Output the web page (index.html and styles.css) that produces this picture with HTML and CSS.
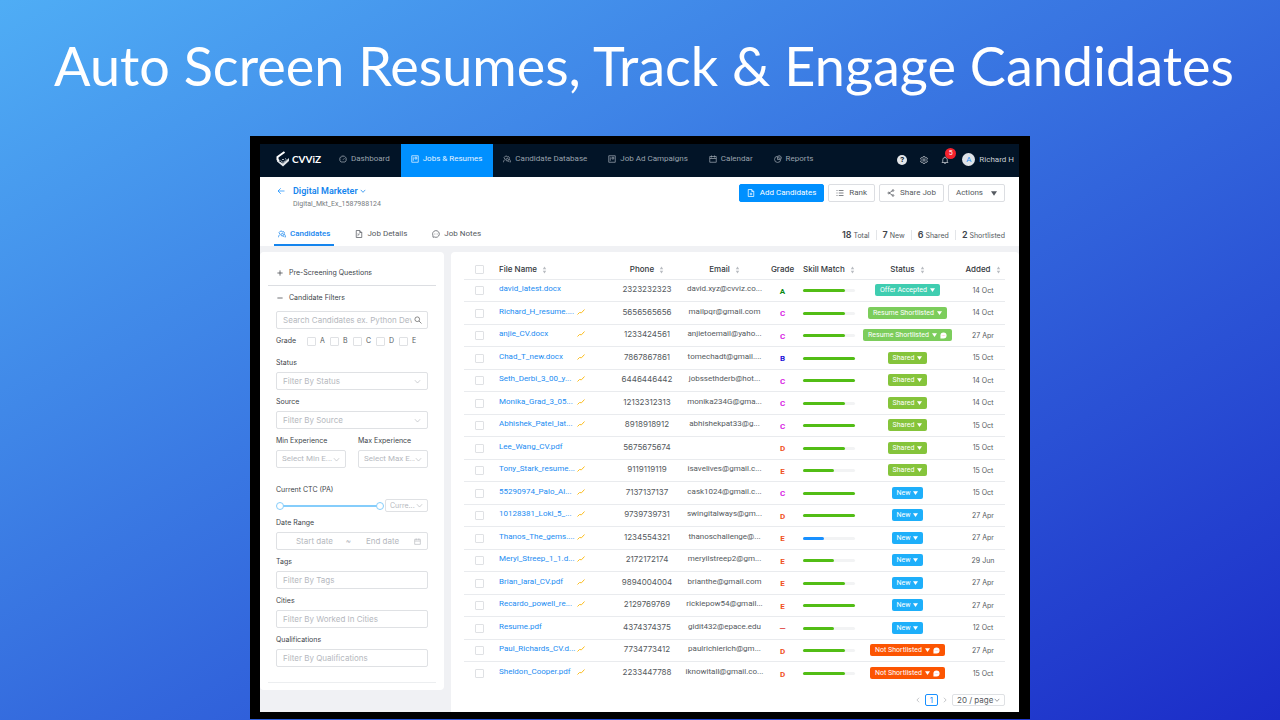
FILE: index.html
```html
<!DOCTYPE html>
<html lang="en">
<head>
<meta charset="utf-8">
<title>Auto Screen Resumes, Track &amp; Engage Candidates</title>
<link rel="stylesheet" href="styles.css">
</head>
<body>
<svg class="sprite" aria-hidden="true">
  <symbol id="i-gauge" viewBox="0 0 16 16"><path d="M4 14a6.7 6.7 0 1 1 8 0zM8 9.500l3-3M8 3v1M3 8.500h1M12 8.500h1M4.500 5l.7.7"/></symbol>
  <symbol id="i-board" viewBox="0 0 16 16"><path d="M1.500 1.500h13v13h-13zM4.500 4.500v7M8 4.500v3.500h3.500v-3.500z"/></symbol>
  <symbol id="i-people" viewBox="0 0 16 16"><path d="M3.500 8A3.500 3.500 0 1 1 9.500 5M1 14.500c0-3 1.500-5 4-6M10 3a3 3 0 0 1 2.500 4.500M12.500 8c1.500 1.500 2.500 3.500 2.500 6.500"/><circle cx="8.500" cy="9.500" r="2.500"/><path d="M10 11.500l3 3"/></symbol>
  <symbol id="i-cal" viewBox="0 0 16 16"><path d="M1.500 3h13v11.500h-13zM1.500 7h13M5 1v4M11 1v4"/></symbol>
  <symbol id="i-pie" viewBox="0 0 16 16"><path d="M7 2.500A6.200 6.200 0 1 0 13.500 9H7zM9.500 1v5.500H15A6 6 0 0 0 9.500 1z"/></symbol>
  <symbol id="i-gear" viewBox="0 0 16 16"><path d="M6.500 1h3l.5 2 1.500.9 2-.7 1.500 2.600-1.500 1.400v1.600l1.500 1.400-1.500 2.600-2-.7-1.500.9-.5 2h-3l-.5-2-1.500-.9-2 .7L1 10.200l1.500-1.400V7.200L1 5.800l1.500-2.600 2 .7L6 3z"/><circle cx="8" cy="8" r="2.300"/></symbol>
  <symbol id="i-bell" viewBox="0 0 16 16"><path d="M1.500 13h13M3.500 13V7.500a4.500 4.500 0 0 1 9 0V13M6.500 15h3M8 1v2"/></symbol>
  <symbol id="i-doc" viewBox="0 0 16 16"><path d="M2.500 1h7l4 4v10h-11zM9.500 1v4h4M5.500 10h5M8 7.500v5"/></symbol>
  <symbol id="i-docedit" viewBox="0 0 16 16"><path d="M2.500 1h7l4 4v10h-11zM9.500 1v4h4M5 11.500l4.500-4M5 8h2"/></symbol>
  <symbol id="i-chat" viewBox="0 0 16 16"><path d="M2 14.500l-.3-4A6.700 6.700 0 1 1 5 14zM4.500 8h1M7.500 8h1M10.500 8h1"/></symbol>
  <symbol id="i-list" viewBox="0 0 16 16"><path d="M5.500 3H15M5.500 8H15M5.500 13H15M1 3h2M1 8h2M1 13h2"/></symbol>
  <symbol id="i-share" viewBox="0 0 16 16"><path d="M11 3.500L4.500 8l6.500 4.500"/><circle cx="12" cy="3" r="1.700"/><circle cx="3.500" cy="8" r="1.700"/><circle cx="12" cy="13" r="1.700"/></symbol>
  <symbol id="i-back" viewBox="0 0 16 16"><path d="M15 8H2M7.500 2.500L2 8l5.500 5.500"/></symbol>
  <symbol id="i-down" viewBox="0 0 16 16"><path d="M2 5l6 6.500L14 5"/></symbol>
  <symbol id="i-left" viewBox="0 0 16 16"><path d="M11 2L5 8l6 6"/></symbol>
  <symbol id="i-right" viewBox="0 0 16 16"><path d="M5 2l6 6-6 6"/></symbol>
  <symbol id="i-search" viewBox="0 0 16 16"><circle cx="6.500" cy="6.500" r="4.700"/><path d="M10 10l5 5"/></symbol>
  <symbol id="i-plus" viewBox="0 0 16 16"><path d="M8 1v14M1 8h14"/></symbol>
  <symbol id="i-minus" viewBox="0 0 16 16"><path d="M1 8h14"/></symbol>
  <symbol id="i-sort" viewBox="0 0 8 14"><path d="M4 1l3 4.500H1zM4 13L1 8.500h6z"/></symbol>
  <symbol id="i-caret" viewBox="0 0 8 6"><path d="M0 0h8L4 6z"/></symbol>
  <symbol id="i-trend" viewBox="0 0 16 12"><path d="M1 11l4-4 4 .5L15 1"/></symbol>
  <symbol id="i-bubble" viewBox="0 0 16 16"><path class="solid" d="M1 15V8a7 7 0 1 1 7 7z"/><path class="dots" d="M4 8h2M7 8h2M10 8h2"/></symbol>
</svg>
<main class="slide">
  <h1 class="title">Auto Screen Resumes, Track &amp; Engage Candidates</h1>
  <div class="frame">
    <header class="topbar">
      <a class="logo" href="#" aria-label="CVViZ">
        <svg class="logo-mark" viewBox="0 0 28 32"><path d="M17 2L3 12v5l3 3" fill="none" stroke="#fff" stroke-width="4"/><path d="M2 18l12 7 12-11v6L14 31 2 21z" fill="#e3e7eb"/><path d="M9 19l5 4 5-4M12 16l2 2 2-2M18 15l3 2" fill="none" stroke="#aab4bf" stroke-width="2"/></svg>
        <span>CVViZ</span>
      </a>
      <nav class="nav">
        <a href="#"><svg class="icon"><use href="#i-gauge"/></svg>Dashboard</a>
        <a href="#" class="active"><svg class="icon"><use href="#i-board"/></svg>Jobs &amp; Resumes</a>
        <a href="#"><svg class="icon"><use href="#i-people"/></svg>Candidate Database</a>
        <a href="#"><svg class="icon"><use href="#i-board"/></svg>Job Ad Campaigns</a>
        <a href="#"><svg class="icon"><use href="#i-cal"/></svg>Calendar</a>
        <a href="#"><svg class="icon"><use href="#i-pie"/></svg>Reports</a>
      </nav>
      <div class="tools">
        <button class="help" aria-label="Help">?</button>
        <button aria-label="Settings"><svg class="icon"><use href="#i-gear"/></svg></button>
        <button class="bell" aria-label="Notifications"><svg class="icon"><use href="#i-bell"/></svg><span class="badge">5</span></button>
        <a class="user" href="#"><span class="avatar">A</span>Richard H</a>
      </div>
    </header>
    <section class="head">
      <div class="head-row">
        <button class="back" aria-label="Back"><svg class="icon"><use href="#i-back"/></svg></button>
        <div class="job">
          <h2>Digital Marketer <svg class="icon tiny"><use href="#i-down"/></svg></h2>
          <p>Digital_Mkt_Ex_1587988124</p>
        </div>
        <div class="actions">
          <button class="btn primary"><svg class="icon"><use href="#i-doc"/></svg>Add Candidates</button>
          <button class="btn"><svg class="icon"><use href="#i-list"/></svg>Rank</button>
          <button class="btn"><svg class="icon"><use href="#i-share"/></svg>Share Job</button>
          <button class="btn wide">Actions<svg class="caret"><use href="#i-caret"/></svg></button>
        </div>
      </div>
      <div class="tab-row">
        <nav class="tabs">
          <a href="#" class="active"><svg class="icon"><use href="#i-people"/></svg>Candidates</a>
          <a href="#"><svg class="icon"><use href="#i-docedit"/></svg>Job Details</a>
          <a href="#"><svg class="icon"><use href="#i-chat"/></svg>Job Notes</a>
        </nav>
        <ul class="stats">
          <li><b>18</b> Total</li><li><b>7</b> New</li><li><b>6</b> Shared</li><li><b>2</b> Shortlisted</li>
        </ul>
      </div>
    </section>
    <div class="body">
      <form class="filters">
        <button type="button" class="fold"><svg class="icon tiny"><use href="#i-plus"/></svg>Pre-Screening Questions</button>
        <hr>
        <button type="button" class="fold"><svg class="icon tiny"><use href="#i-minus"/></svg>Candidate Filters</button>
        <div class="fields">
          <div class="control search"><input aria-label="Search candidates" placeholder="Search Candidates ex. Python Developer"><svg class="icon"><use href="#i-search"/></svg></div>
          <fieldset class="grades">
            <legend>Grade</legend>
            <label><input type="checkbox">A</label><label><input type="checkbox">B</label><label><input type="checkbox">C</label><label><input type="checkbox">D</label><label><input type="checkbox">E</label>
          </fieldset>
          <div class="field"><label for="status">Status</label><div class="control"><select id="status"><option>Filter By Status</option></select><svg class="icon"><use href="#i-down"/></svg></div></div>
          <div class="field"><label for="source">Source</label><div class="control"><select id="source"><option>Filter By Source</option></select><svg class="icon"><use href="#i-down"/></svg></div></div>
          <div class="pair">
            <div class="field"><label for="min">Min Experience</label><div class="control"><select id="min"><option>Select Min E...</option></select><svg class="icon"><use href="#i-down"/></svg></div></div>
            <div class="field"><label for="max">Max Experience</label><div class="control"><select id="max"><option>Select Max E...</option></select><svg class="icon"><use href="#i-down"/></svg></div></div>
          </div>
          <div class="field ctc"><label for="ctc-low">Current CTC (PA)</label>
            <div class="range-row">
              <div class="range"><input id="ctc-low" type="range" value="0"><input type="range" value="100" aria-label="Maximum CTC"></div>
              <div class="control"><select aria-label="Currency"><option>Curre...</option></select><svg class="icon"><use href="#i-down"/></svg></div>
            </div>
          </div>
          <div class="field"><label for="start">Date Range</label><div class="control dates"><input id="start" placeholder="Start date"><span>~</span><input aria-label="End date" placeholder="End date"><svg class="icon"><use href="#i-cal"/></svg></div></div>
          <div class="field"><label for="tags">Tags</label><div class="control"><input id="tags" placeholder="Filter By Tags"></div></div>
          <div class="field"><label for="cities">Cities</label><div class="control"><input id="cities" placeholder="Filter By Worked In Cities"></div></div>
          <div class="field"><label for="quals">Qualifications</label><div class="control"><input id="quals" placeholder="Filter By Qualifications"></div></div>
        </div>
        <hr class="last">
      </form>
      <section class="results">
        <table>
          <colgroup><col class="c-check"><col><col class="c-phone"><col class="c-email"><col class="c-grade"><col class="c-skill"><col class="c-status"><col class="c-added"></colgroup>
          <thead><tr>
            <th><input type="checkbox" aria-label="Select all"></th>
            <th class="name">File Name<svg class="sort"><use href="#i-sort"/></svg></th>
            <th>Phone<svg class="sort"><use href="#i-sort"/></svg></th>
            <th>Email<svg class="sort"><use href="#i-sort"/></svg></th>
            <th>Grade</th>
            <th class="skill">Skill Match<svg class="sort"><use href="#i-sort"/></svg></th>
            <th>Status<svg class="sort"><use href="#i-sort"/></svg></th>
            <th class="added">Added<svg class="sort"><use href="#i-sort"/></svg></th>
          </tr></thead>
          <tbody id="rows"></tbody>
        </table>
        <nav class="pager" aria-label="Pages">
          <button aria-label="Previous"><svg class="icon"><use href="#i-left"/></svg></button>
          <button class="current">1</button>
          <button aria-label="Next"><svg class="icon"><use href="#i-right"/></svg></button>
          <div class="control"><select aria-label="Page size"><option>20 / page</option></select><svg class="icon"><use href="#i-down"/></svg></div>
        </nav>
      </section>
    </div>
  </div>
</main>
<script src="rows.js"></script>
</body>
</html>
```
FILE: rows.js
```js
// name, has trend, phone, email, grade, match %, status, has comment, date
const candidates = [
  ["david_latest.docx", 0, "2323232323", "david.xyz@cvviz.co...", "A", 80, "Offer Accepted", 0, "14 Oct"],
  ["Richard_H_resume....", 1, "5656565656", "mailpqr@gmail.com", "C", 80, "Resume Shortlisted", 0, "14 Oct"],
  ["anjie_CV.docx", 1, "1233424561", "anjietoemail@yaho...", "C", 80, "Resume Shortlisted", 1, "27 Apr"],
  ["Chad_T_new.docx", 1, "7867867861", "tomechadt@gmail....", "B", 100, "Shared", 0, "15 Oct"],
  ["Seth_Derbi_3_00_y...", 1, "6446446442", "jobssethderb@hot...", "C", 100, "Shared", 0, "14 Oct"],
  ["Monika_Grad_3_05...", 1, "12132312313", "monika234G@gma...", "C", 80, "Shared", 0, "14 Oct"],
  ["Abhishek_Patel_lat...", 1, "8918918912", "abhishekpat33@g...", "C", 100, "Shared", 0, "15 Oct"],
  ["Lee_Wang_CV.pdf", 0, "5675675674", "", "D", 80, "Shared", 0, "15 Oct"],
  ["Tony_Stark_resume...", 1, "9119119119", "isavelives@gmail.c...", "E", 60, "Shared", 0, "15 Oct"],
  ["55290974_Palo_Al...", 1, "7137137137", "cask1024@gmail.c...", "C", 100, "New", 0, "15 Oct"],
  ["10128381_Loki_5_...", 1, "9739739731", "swingitalways@gm...", "D", 100, "New", 0, "27 Apr"],
  ["Thanos_The_gems....", 1, "1234554321", "thanoschallenge@...", "E", 40, "New", 0, "27 Apr"],
  ["Meryl_Streep_1_1.d...", 1, "2172172174", "meryilstreep2@gm...", "E", 60, "New", 0, "29 Jun"],
  ["Brian_laral_CV.pdf", 1, "9894004004", "brianthe@gmail.com", "E", 80, "New", 0, "27 Apr"],
  ["Recardo_powell_re...", 1, "2129769769", "rickiepow54@gmail...", "E", 100, "New", 0, "27 Apr"],
  ["Resume.pdf", 0, "4374374375", "gidit432@epace.edu", "—", 60, "New", 0, "12 Oct"],
  ["Paul_Richards_CV.d...", 1, "7734773412", "paulrichierich@gm...", "D", 80, "Not Shortlisted", 1, "27 Apr"],
  ["Sheldon_Cooper.pdf", 1, "2233447788", "iknowitall@gmail.co...", "D", 80, "Not Shortlisted", 1, "15 Oct"]
];

const slug = (text) => text.toLowerCase().replace(" ", "-");

document.getElementById("rows").innerHTML = candidates.map(([name, trend, phone, email, grade, match, status, comment, date]) => `
  <tr>
    <td><input type="checkbox" aria-label="Select ${name}"></td>
    <td class="name high"><div class="file"><a href="#">${name}</a>${trend ? '<svg class="trend"><use href="#i-trend"/></svg>' : ""}</div></td>
    <td class="phone high">${phone}</td>
    <td class="high">${email}</td>
    <td class="grade grade-${grade === "—" ? "none" : grade}">${grade}</td>
    <td class="skill"><div class="bar"><div class="fill${match < 50 ? " low" : ""}" style="width:${match}%"></div></div></td>
    <td><button class="tag ${slug(status)}">${status}<svg class="caret"><use href="#i-caret"/></svg>${comment ? '<svg class="bubble"><use href="#i-bubble"/></svg>' : ""}</button></td>
    <td class="added">${date}</td>
  </tr>`).join("");
```
FILE: styles.css
```css
* { box-sizing: border-box; }
body { margin: 0; font-family: Roboto, "Liberation Sans", sans-serif; font-size: 8px; line-height: 12px; color: #555a60; }
h1, h2, p, ul, fieldset, legend { margin: 0; padding: 0; border: 0; }
a { color: inherit; text-decoration: none; }
button, input, select { font: inherit; color: inherit; margin: 0; padding: 0; border: 0; background: none; }
.sprite { display: none; }
.icon { width: 8px; height: 8px; flex: none; fill: none; stroke: currentColor; stroke-width: 1.5; }
.icon.tiny { width: 6px; height: 6px; stroke-width: 2; }
.caret { width: 6px; height: 5px; fill: currentColor; flex: none; }
.filters, .stats, .phone, th, .pager { font-family: Inter, "Liberation Sans", sans-serif; }

.slide { min-height: 100vh; padding: 30px 250px 1px; background: linear-gradient(to bottom right, #4fadf5, #1b2cc8); }
.title { margin: 0 -250px 34px; padding-left: 8px; text-align: center; white-space: nowrap; color: #fff; font: 400 54px/72px Lato, sans-serif; }
.frame { padding: 8px 11px 7px 10px; background: #000; }

.topbar { display: flex; height: 33px; padding-right: 5px; background: #021427; color: #9aa3ad; }
.logo { display: flex; align-items: center; gap: 2px; width: 69px; padding: 0 0 3px 16px; color: #fff; font: 700 10px/12px Lato, sans-serif; }
.logo-mark { width: 14px; height: 16px; }
.nav { display: flex; }
.nav a { display: flex; align-items: center; gap: 4px; padding: 0 11px 3px 10px; white-space: nowrap; }
.nav .active { background: #0090ff; color: #e5f3ff; }
.tools { display: flex; align-items: center; gap: 13px; margin-left: auto; padding-bottom: 2px; color: #c9ced4; }
.tools button { display: flex; position: relative; }
.tools .help { justify-content: center; width: 10px; height: 10px; border-radius: 50%; background: #e4e7ea; color: #021427; font-weight: 700; line-height: 10px; }
.badge { position: absolute; left: 4px; top: -8px; width: 11px; height: 11px; border-radius: 50%; background: #f5222d; color: #fff; font-size: 7px; line-height: 11px; text-align: center; }
.user { display: flex; align-items: center; gap: 4px; white-space: nowrap; }
.avatar { width: 13px; height: 13px; border-radius: 50%; background: #dfe3e8; color: #2b8ff0; line-height: 13px; text-align: center; }

.head { background: #fff; padding: 7px 14px 0; }
.head-row { display: flex; align-items: flex-start; }
.back { display: flex; width: 19px; padding: 3px 3px; color: #1890ff; }
.job h2 { color: #1585ee; font-size: 9px; line-height: 14px; font-weight: 600; }
.job p { font-size: 7px; line-height: 12px; color: #777b80; }
.actions { display: flex; gap: 4px; margin-left: auto; }
.btn { display: flex; align-items: center; gap: 5px; height: 18px; padding: 0 7px; border: 1px solid #dcdee2; border-radius: 2px; white-space: nowrap; }
.btn.primary { background: #0090ff; border-color: #0090ff; color: #fff; }
.btn.wide { gap: 8px; }
.tab-row { display: flex; justify-content: space-between; margin-top: 13px; }
.tabs { display: flex; gap: 17px; }
.tabs a { display: flex; align-items: center; gap: 4px; height: 23px; padding: 0 4px; border-bottom: 2px solid transparent; }
.tabs .active { color: #1585ee; border-color: #1585ee; font-weight: 500; }
.stats { display: flex; align-items: center; padding-top: 1px; list-style: none; font-size: 7px; }
.stats li + li { margin-left: 6px; padding-left: 6px; border-left: 1px solid #e3e5e8; line-height: 9px; }
.stats b { font-size: 9px; font-weight: 600; color: #40444a; }

.body { display: flex; gap: 7px; padding-top: 6px; background: #f0f1f4; }
.filters { flex: 0 0 184px; align-self: flex-start; padding: 15px 8px 7px; background: #fff; border-radius: 4px; font-size: 7px; }
.fold { display: flex; align-items: center; gap: 6px; height: 12px; padding: 0 9px; color: #40444a; font-size: 7px; }
hr { margin: 6px 0; border: 0; border-top: 1px solid #dcdee2; }
hr.last { margin: 15px 0 0; border-color: #eceef0; }
.fields { display: flex; flex-direction: column; gap: 6px; margin-top: 7px; padding: 0 8px; }
.field { display: flex; flex-direction: column; gap: 3px; min-width: 0; }
.field > label, .grades legend { color: #40444a; font-size: 7px; line-height: 12px; }
.control { display: flex; align-items: center; height: 18px; padding: 0 6px; border: 1px solid #dfe1e4; border-radius: 2px; color: #b5b8be; font-size: 8px; }
.control input { flex: 1; width: 0; min-width: 0; }
.control select { flex: 1; width: 0; min-width: 0; appearance: none; outline: 0; }
.control .icon { width: 7px; height: 7px; }
.control ::placeholder { color: #b5b8be; opacity: 1; }
.control.search { gap: 2px; padding-right: 5px; }
.search .icon { color: #666; width: 8px; height: 8px; }
.grades { display: flex; align-items: center; height: 12px; margin-bottom: 4px; }
.grades legend { float: left; width: 31px; }
.grades label { display: flex; align-items: center; gap: 4px; width: 23px; }
input[type="checkbox"] { display: block; appearance: none; width: 9px; height: 9px; border: 1px solid #dfe1e4; border-radius: 1px; background: #fff; }
.pair { display: grid; grid-template-columns: 1fr 1fr; gap: 12px; }
.pair .control { padding: 0 5px; font-family: Roboto, "Liberation Sans", sans-serif; }
.ctc { margin: 10px 0 -1px; }
.range-row { display: flex; gap: 1px; }
.range { display: grid; flex: 1; align-items: center; background: linear-gradient(#85cdfb, #85cdfb) center / calc(100% - 6px) 2px no-repeat; }
.range input { grid-area: 1 / 1; width: 100%; height: 8px; appearance: none; }
.range input::-webkit-slider-thumb { appearance: none; width: 8px; height: 8px; border: 1px solid #85cdfb; border-radius: 50%; background: #fff; }
.range-row .control { width: 43px; height: 13px; padding: 0 4px; font-size: 7px; }
.dates { text-align: center; }
.dates input { text-align: center; }

.results { flex: 1; min-width: 0; padding: 7px 14px 6px 13px; background: #fff; border-radius: 4px 4px 0 0; }
table { width: 100%; border-collapse: separate; border-spacing: 0; table-layout: fixed; }
.c-check { width: 30px; }
.c-phone { width: 74px; }
.c-email { width: 81px; }
.c-grade { width: 35px; }
.c-skill { width: 60px; }
.c-status { width: 95px; }
.c-added { width: 50px; }
th, td { padding: 0; text-align: center; white-space: nowrap; border-bottom: 1px solid #e9ebee; }
th { height: 21px; color: #33373c; font-weight: 500; }
td { height: 22px; }
tr:nth-child(even) td { height: 23px; }
tbody tr:last-child td { border-bottom: 0; }
th:first-child input, td:first-child input { margin: 0 auto; }
td.name, th.name { padding-left: 5px; text-align: left; }
td.high { padding-bottom: 3px; }
.file { display: flex; justify-content: space-between; align-items: center; width: 86px; color: #1b8cf2; }
.trend { flex: none; width: 8px; height: 6px; fill: none; stroke: #fbbd1f; stroke-width: 2; }
.sort { width: 5px; height: 8px; margin-left: 5px; vertical-align: -2px; fill: #b9bcc1; }
.grade { padding-top: 2px; font-weight: 700; }
.grade-A { color: #0a8a16; }
.grade-B { color: #1d12d8; }
.grade-C { color: #d71de4; }
.grade-D, .grade-E { color: #f05023; }
.grade-none { color: #e04040; }
td.skill, th.skill { padding-left: 3px; text-align: left; }
.bar { width: 52px; height: 3px; border-radius: 2px; background: #f2f3f4; }
.fill { height: 3px; border-radius: 2px; background: #52bd15; }
.fill.low { background: #1890ff; }
.tag { display: inline-flex; align-items: center; gap: 3px; height: 12px; padding: 0 5px; border-radius: 2px; color: #fff; font-size: 7px; vertical-align: middle; }
.tag .caret { width: 5px; height: 4px; }
.bubble { width: 7px; height: 7px; }
.solid { fill: #fff; }
.dots { stroke: #f99; stroke-width: 1; }
.offer-accepted { background: #3fcdb0; }
.resume-shortlisted { background: #7ccd5c; }
.shared { background: #85c43b; }
.new { background: #1eaffa; }
.not-shortlisted { background: #fc5502; }
.added { padding-left: 6px; font-size: 7px; }
td.added { font-family: Inter, "Liberation Sans", sans-serif; }
th.added { font-size: 8px; }
.pager { display: flex; justify-content: flex-end; align-items: center; gap: 4px; margin-top: 9px; color: #999da3; }
.pager button { display: flex; justify-content: center; }
.pager .icon { width: 6px; height: 6px; }
.pager .current { width: 13px; height: 12px; border: 1px solid #1890ff; border-radius: 2px; color: #1890ff; line-height: 10px; }
.pager .control { width: 53px; height: 12px; padding: 0 4px; color: #555a60; }
```
